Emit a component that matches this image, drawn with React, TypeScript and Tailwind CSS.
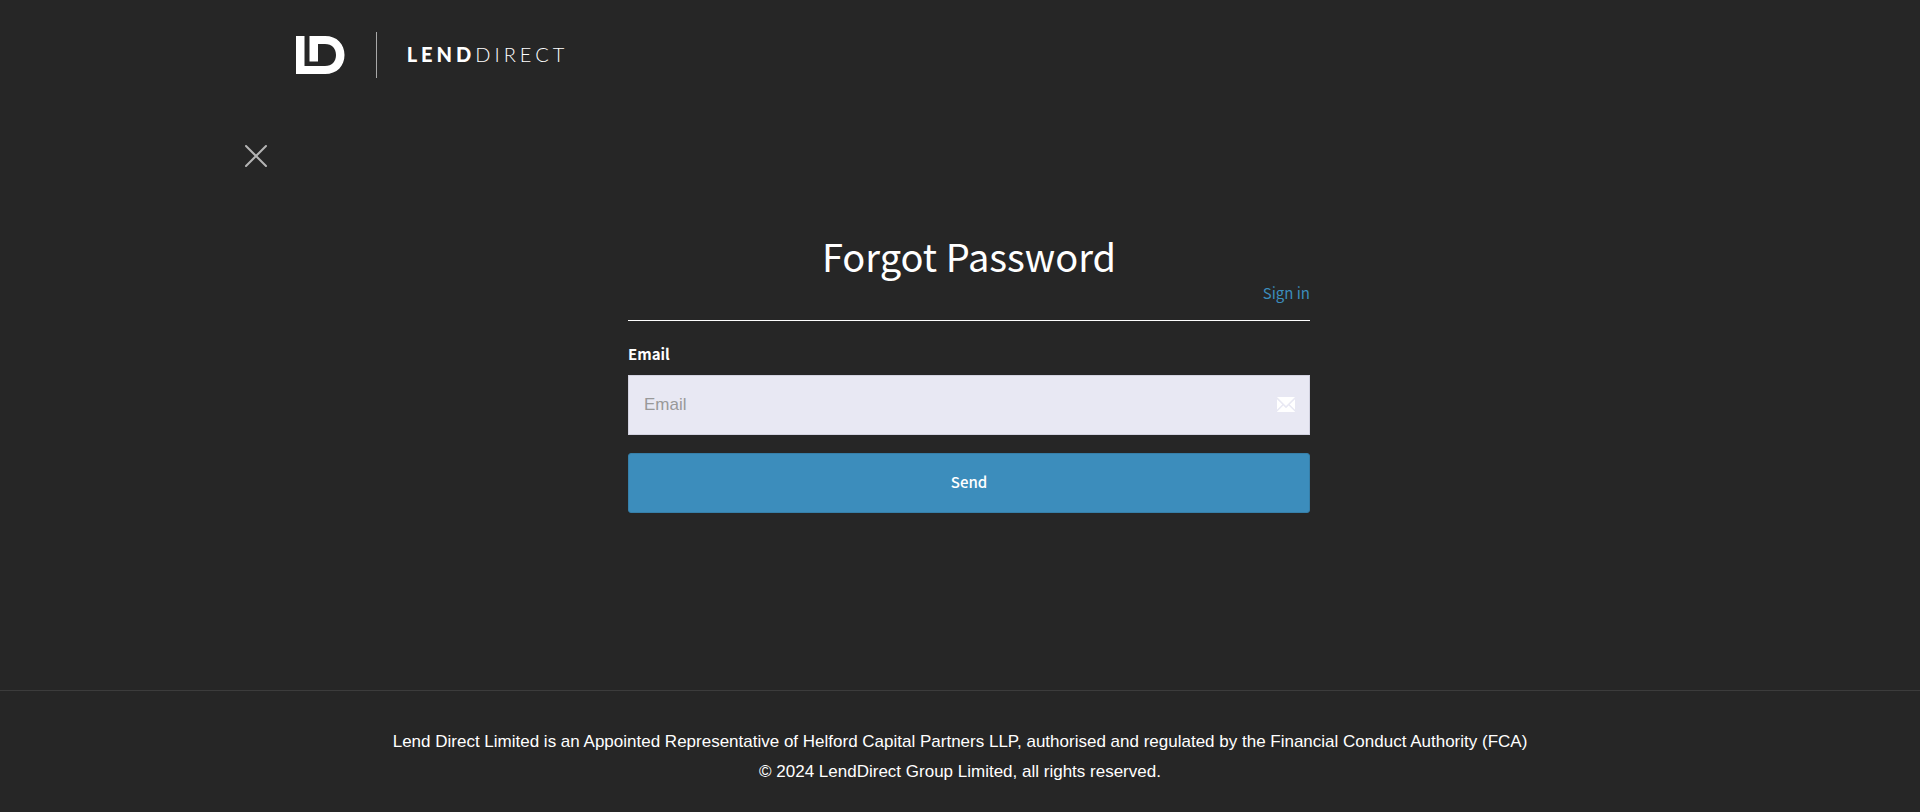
import React from "react";

function LogoMark() {
  return (
    <svg width="49" height="39" viewBox="0 0 49 39" aria-hidden="true">
      <path
        fill="#fff"
        fillRule="evenodd"
        d="M0 0H8.5V30H29C36 30 40 25.5 40 19C40 12.5 36 8 29 8H22V25.5H13.5V0H29C41 0 48.5 8 48.5 19C48.5 30 41 38 29 38H0Z"
      />
    </svg>
  );
}

function EnvelopeIcon() {
  return (
    <svg width="18" height="15" viewBox="0 0 18 15" aria-hidden="true">
      <g fill="#fff">
        <path d="M0 0H18L9 9Z" />
        <path d="M0 2.2L5.3 7.5L0 12.8Z" />
        <path d="M18 2.2L12.7 7.5L18 12.8Z" />
        <path d="M6.3 8.5L9 11.2L11.7 8.5L18 14.8V15H0V14.8Z" />
      </g>
    </svg>
  );
}

function Header() {
  return (
    <header className="px-[15.4%] pt-8">
      <a href="#" className="flex w-fit items-center" aria-label="Lend Direct">
        <LogoMark />
        <span className="ml-[31px] h-[46px] w-px bg-[#a8a8a8]" />
        <span className="ml-[30px] pb-[2px] font-[Lato,sans-serif] text-[20px] leading-6 tracking-[4px] text-white">
          <span className="font-black">LEND</span>
          <span className="font-light">DIRECT</span>
        </span>
      </a>
    </header>
  );
}

function ForgotPasswordForm() {
  return (
    <form className="mx-auto w-full max-w-[682px] pt-[86px]" onSubmit={(e) => e.preventDefault()}>
      <div className="border-b border-white pb-[15px]">
        <h1 className="text-center text-[38px] leading-[50px]">Forgot Password</h1>
        <div className="text-right text-[15px] leading-6">
          <a href="#" className="text-[#3c8dbc]">
            Sign in
          </a>
        </div>
      </div>
      <label htmlFor="email" className="mt-[21px] block text-[15px] leading-6 font-bold">
        Email
      </label>
      <div className="relative mt-[9px]">
        <input
          id="email"
          type="email"
          placeholder="Email"
          className="block h-[60px] w-full border border-[#d2d2e0] bg-[#e8e8f3] px-[15px] font-['Liberation_Sans',sans-serif] text-[17px] text-[#333] outline-none placeholder:text-[#999]"
        />
        <span className="pointer-events-none absolute inset-y-0 right-[15px] flex items-center pb-[2px]">
          <EnvelopeIcon />
        </span>
      </div>
      <button
        type="submit"
        className="mt-[18px] block h-[60px] w-full rounded-[3px] border border-[#367fa9] bg-[#3c8dbc] pb-[2px] text-[15px] font-medium"
      >
        Send
      </button>
    </form>
  );
}

export default function App() {
  return (
    <div className="flex min-h-screen flex-col bg-[#262626] font-['Noto_Sans_CJK_SC',sans-serif] text-white">
      <Header />
      <main className="flex flex-1 items-start px-[245px] pt-[67px]">
        <button type="button" aria-label="Close" className="shrink-0">
          <svg width="22" height="22" viewBox="0 0 22 22" aria-hidden="true">
            <path d="M1 1L21 21M21 1L1 21" stroke="#b4b4b4" strokeWidth="2" strokeLinecap="round" />
          </svg>
        </button>
        <div className="flex-1 pr-1">
          <ForgotPasswordForm />
        </div>
      </main>
      <footer className="border-t border-[#3c3c3c] px-4 pt-9 pb-[25px] text-center font-['Liberation_Sans',sans-serif] text-[17px] leading-[30px]">
        <p>
          Lend Direct Limited is an Appointed Representative of Helford Capital Partners LLP, authorised and regulated
          by the Financial Conduct Authority (FCA)
        </p>
        <p>© 2024 LendDirect Group Limited, all rights reserved.</p>
      </footer>
    </div>
  );
}
